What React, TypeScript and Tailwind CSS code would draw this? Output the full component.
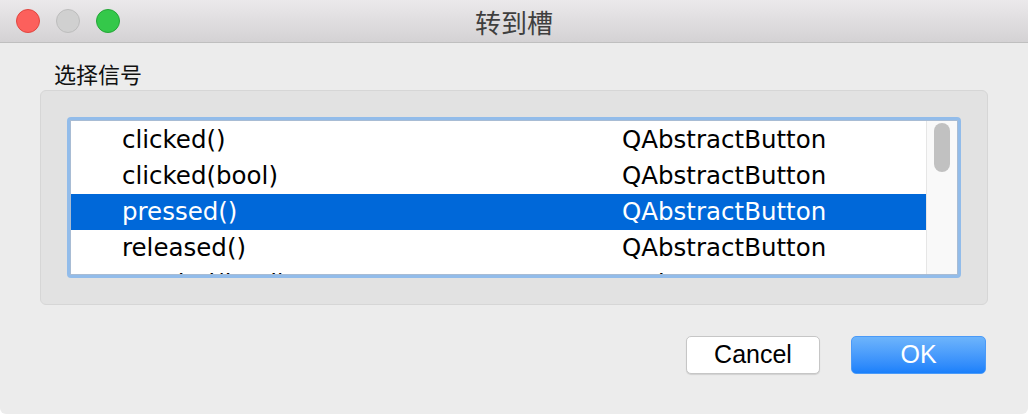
import React from "react";

const rows = [
  { name: "clicked()", cls: "QAbstractButton", sel: false },
  { name: "clicked(bool)", cls: "QAbstractButton", sel: false },
  { name: "pressed()", cls: "QAbstractButton", sel: true },
  { name: "released()", cls: "QAbstractButton", sel: false },
  { name: "toggled(bool)", cls: "QAbstractButton", sel: false },
];

export default function App() {
  return (
    <div
      className="w-[1028px] h-[414px] bg-[#ececec] flex flex-col overflow-hidden rounded-b-[6px]"
      style={{ fontFamily: "'DejaVu Sans', sans-serif" }}
    >
      {/* Title bar */}
      <div className="relative h-[43px] shrink-0 border-b border-[#bfbfbf] bg-gradient-to-b from-[#ebe9eb] to-[#d4d2d4] flex items-center pl-[16px] gap-[16px]">
        <div className="w-[24px] h-[24px] rounded-full bg-[#fc605c] border border-[#e1463f]" />
        <div className="w-[24px] h-[24px] rounded-full bg-[#d0d0d0] border border-[#bdbdbd]" />
        <div className="w-[24px] h-[24px] rounded-full bg-[#34c84a] border border-[#24a637]" />
        <div
          className="absolute inset-0 flex items-center justify-center text-[26px] text-[#3f3f3f]"
          style={{ fontFamily: "'Noto Sans CJK SC', 'Noto Sans', sans-serif" }}
        >
          转到槽
        </div>
      </div>

      {/* Body */}
      <div className="flex flex-col px-[40px]">
        <div
          className="mt-[16px] ml-[14px] h-[28px] leading-[28px] text-[22px] text-[#111]"
          style={{ fontFamily: "'Noto Sans CJK SC', 'Noto Sans', sans-serif" }}
        >
          选择信号
        </div>
        <div className="mt-[3px] h-[215px] rounded-[6px] bg-[#e2e2e2] border border-[#d6d6d6] pt-[26px] pl-[26px] pr-[26px]">
          <div className="w-[894px] h-[161px] rounded-[4px] border-[3px] border-[#92bcea]">
            <div className="w-full h-full border border-[#a8bcd4] bg-white flex overflow-hidden">
              <div className="flex-1 pt-[1px] flex flex-col overflow-hidden">
                {rows.map((r) => (
                  <div
                    key={r.name}
                    className={`h-[36px] shrink-0 flex items-center text-[24.5px] ${
                      r.sel ? "bg-[#0068d9] text-white" : "text-black"
                    }`}
                  >
                    <span className="w-[551px] pl-[51px] whitespace-nowrap">{r.name}</span>
                    <span className="whitespace-nowrap">{r.cls}</span>
                  </div>
                ))}
              </div>
              <div className="w-[31px] shrink-0 bg-[#f9f9f9] border-l border-[#e6e6e6] flex justify-center pt-[2px]">
                <div className="w-[16px] h-[49px] rounded-full bg-[#c1c1c1]" />
              </div>
            </div>
          </div>
        </div>
        <div
          className="mt-[31px] flex justify-end gap-[31px] pr-[2px]"
          style={{ fontFamily: "'Liberation Sans', Arial, sans-serif" }}
        >
          <button className="w-[134px] h-[38px] rounded-[5px] bg-white border border-[#c6c6c6] shadow-[0_1px_1px_rgba(0,0,0,0.12)] text-[25px] text-black flex items-center justify-center">
            Cancel
          </button>
          <button className="w-[135px] h-[38px] rounded-[5px] bg-gradient-to-b from-[#6db4fb] to-[#1a80fb] border border-[#4a9af8] text-[25px] text-white flex items-center justify-center">
            OK
          </button>
        </div>
      </div>
    </div>
  );
}
